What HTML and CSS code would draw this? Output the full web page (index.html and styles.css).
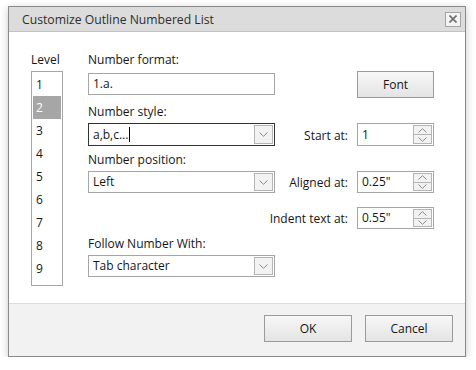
FILE: index.html
```html
<!DOCTYPE html>
<html>
<head>
<meta charset="utf-8">
<link rel="stylesheet" href="styles.css">
</head>
<body>
<div class="dialog">
  <div class="titlebar">
    <span class="title">Customize Outline Numbered List</span>
    <span class="close"><svg width="8" height="8" viewBox="0 0 8 8"><path d="M0.5 0.5 L7.5 7.5 M7.5 0.5 L0.5 7.5" stroke="#6d6d6d" stroke-width="1.6" fill="none"/></svg></span>
  </div>
  <div class="content">
    <div class="level-col">
      <div class="level-label">Level</div>
      <ul class="level-list">
        <li>1</li>
        <li class="selected">2</li>
        <li>3</li>
        <li>4</li>
        <li>5</li>
        <li>6</li>
        <li>7</li>
        <li>8</li>
        <li>9</li>
      </ul>
    </div>
    <div class="form">
      <div class="lbl row1">Number format:</div>
      <div class="field text-field row2 col1"><span class="val">1.a.</span></div>
      <div class="btn font-btn row2 col3">Font</div>

      <div class="lbl row3 col1 pad5">Number style:</div>
      <div class="field combo focused row4 col1"><span class="val">a,b,c...<span class="caret"></span></span><span class="drop"><svg width="9" height="5" viewBox="0 0 9 5"><path d="M0.5 0.5 L4.5 4.3 L8.5 0.5" stroke="#8a8a8a" stroke-width="1" fill="none"/></svg></span></div>
      <div class="rlbl row4 col2">Start at:</div>
      <div class="field spin row4 col3"><span class="val">1</span><span class="spinbtns"><span class="sb"><svg width="9" height="5" viewBox="0 0 9 5"><path d="M0.5 4.5 L4.5 0.7 L8.5 4.5" stroke="#8a8a8a" stroke-width="1" fill="none"/></svg></span><span class="sb"><svg width="9" height="5" viewBox="0 0 9 5"><path d="M0.5 0.5 L4.5 4.3 L8.5 0.5" stroke="#8a8a8a" stroke-width="1" fill="none"/></svg></span></span></div>

      <div class="lbl row5 col1 pad5">Number position:</div>
      <div class="field combo row6 col1"><span class="val">Left</span><span class="drop"><svg width="9" height="5" viewBox="0 0 9 5"><path d="M0.5 0.5 L4.5 4.3 L8.5 0.5" stroke="#8a8a8a" stroke-width="1" fill="none"/></svg></span></div>
      <div class="rlbl row6 col2">Aligned at:</div>
      <div class="field spin row6 col3"><span class="val">0.25"</span><span class="spinbtns"><span class="sb"><svg width="9" height="5" viewBox="0 0 9 5"><path d="M0.5 4.5 L4.5 0.7 L8.5 4.5" stroke="#8a8a8a" stroke-width="1" fill="none"/></svg></span><span class="sb"><svg width="9" height="5" viewBox="0 0 9 5"><path d="M0.5 0.5 L4.5 4.3 L8.5 0.5" stroke="#8a8a8a" stroke-width="1" fill="none"/></svg></span></span></div>

      <div class="rlbl row8 col2 wide">Indent text at:</div>
      <div class="field spin row8 col3"><span class="val">0.55"</span><span class="spinbtns"><span class="sb"><svg width="9" height="5" viewBox="0 0 9 5"><path d="M0.5 4.5 L4.5 0.7 L8.5 4.5" stroke="#8a8a8a" stroke-width="1" fill="none"/></svg></span><span class="sb"><svg width="9" height="5" viewBox="0 0 9 5"><path d="M0.5 0.5 L4.5 4.3 L8.5 0.5" stroke="#8a8a8a" stroke-width="1" fill="none"/></svg></span></span></div>

      <div class="lbl row9 col1 pad6">Follow Number With:</div>
      <div class="field combo row10 col1"><span class="val">Tab character</span><span class="drop"><svg width="9" height="5" viewBox="0 0 9 5"><path d="M0.5 0.5 L4.5 4.3 L8.5 0.5" stroke="#8a8a8a" stroke-width="1" fill="none"/></svg></span></div>
    </div>
  </div>
  <div class="footer">
    <div class="btn foot-btn">OK</div>
    <div class="btn foot-btn">Cancel</div>
  </div>
</div>
</body>
</html>
```

FILE: styles.css
```css
* { box-sizing: border-box; }
html, body { margin: 0; padding: 0; background: #ffffff; }
body {
  font-family: "Open Sans", "DejaVu Sans", sans-serif;
  font-size: 12px;
  color: #161616;
  padding: 6px 0 0 8px;
}
.dialog {
  width: 458px;
  height: 351px;
  border: 1px solid #8a8a8a;
  background: #ffffff;
  display: flex;
  flex-direction: column;
  box-shadow: 0 2px 8px rgba(0, 0, 0, 0.22);
}
.titlebar {
  height: 25px;
  flex: none;
  background: #dcdcdc;
  border-bottom: 1px solid #c2c2c2;
  display: flex;
  align-items: center;
  justify-content: space-between;
  padding: 0 4px 0 13px;
}
.title {
  font-size: 12.2px;
  color: #2e2e2e;
  line-height: 17px;
}
.close {
  width: 16px;
  height: 15px;
  border: 1px solid #a5a5a5;
  background: #f3f3f3;
  display: flex;
  align-items: center;
  justify-content: center;
}
.close svg { display: block; }
.content {
  flex: 1;
  display: flex;
  padding: 19px 0 0 22px;
  gap: 25px;
}
.level-col { width: 32px; }
.level-label { line-height: 17px; height: 17px; }
.level-list {
  list-style: none;
  margin: 3px 0 0 0;
  padding: 1px 1px 4px 1px;
  border: 1px solid #a6a6a6;
  height: 215px;
}
.level-list li {
  height: 23px;
  line-height: 23px;
  padding-left: 3px;
}
.level-list li.selected {
  background: #a6a6a6;
  color: #ffffff;
}
.form {
  display: grid;
  grid-template-columns: 187px 82px 77px;
  grid-template-rows: 20px 27px 25px 23px 25px 22px 14px 22px 26px 22px;
  align-items: start;
}
.row1 { grid-row: 1; }
.row2 { grid-row: 2; }
.row3 { grid-row: 3; }
.row4 { grid-row: 4; }
.row5 { grid-row: 5; }
.row6 { grid-row: 6; }
.row8 { grid-row: 8; }
.row9 { grid-row: 9; }
.row10 { grid-row: 10; }
.col1 { grid-column: 1; }
.col2 { grid-column: 2; }
.col3 { grid-column: 3; }
.lbl { grid-column: 1 / span 2; line-height: 17px; white-space: nowrap; }
.pad5 { padding-top: 5px; }
.pad6 { padding-top: 6px; }
.rlbl {
  align-self: center;
  text-align: right;
  padding-right: 9px;
  line-height: 17px;
  white-space: nowrap;
  padding-top: 1px;
}
.rlbl.wide { grid-column: 1 / span 2; }
.field {
  height: 22px;
  border: 1px solid #a6a6a6;
  background: #ffffff;
  display: flex;
  align-items: stretch;
}
.text-field { margin-top: 2px; }
.row4.field { height: 23px; }
.field.focused { border-color: #333333; }
.val {
  flex: 1;
  padding-left: 4px;
  line-height: 20px;
  white-space: nowrap;
}
.row4 .val { line-height: 21px; }
.caret {
  display: inline-block;
  width: 1px;
  height: 15px;
  background: #000000;
  vertical-align: -3px;
  margin-left: 1px;
}
.drop {
  width: 19px;
  margin: 1px;
  border: 1px solid #b4b4b4;
  background: #f2f2f2;
  display: flex;
  align-items: center;
  justify-content: center;
}
.drop svg { display: block; }
.spinbtns {
  width: 19px;
  margin: 1px;
  border: 1px solid #b4b4b4;
  display: flex;
  flex-direction: column;
}
.sb {
  flex: 1;
  background: #f2f2f2;
  display: flex;
  align-items: center;
  justify-content: center;
}
.sb + .sb { border-top: 1px solid #b4b4b4; }
.sb svg { display: block; }
.btn {
  border: 1px solid #9a9a9a;
  background: linear-gradient(#f7f7f7, #e4e4e4);
  display: flex;
  align-items: center;
  justify-content: center;
  color: #161616;
}
.font-btn { height: 27px; }
.footer {
  flex: none;
  height: 53px;
  border-top: 1px solid #dcdcdc;
  background: #f2f2f2;
  display: flex;
  justify-content: flex-end;
  align-items: flex-start;
  gap: 13px;
  padding: 11px 12px 0 0;
}
.foot-btn {
  width: 88px;
  height: 27px;
}
```
